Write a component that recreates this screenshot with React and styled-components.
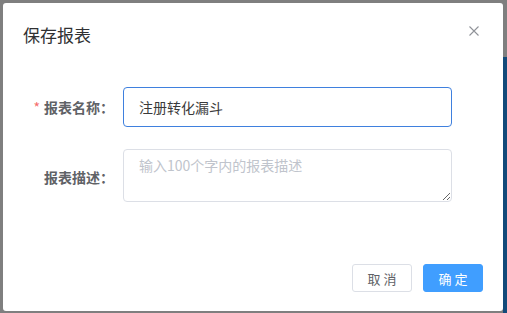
import React, { useState } from 'react'
import styled, { createGlobalStyle } from 'styled-components'

const GlobalStyle = createGlobalStyle`
    html, body {
        margin: 0;
        padding: 0;
        background: #7f7f7f;
        font-family: "Noto Sans CJK SC", "Noto Sans", "Liberation Sans", sans-serif;
    }
`

const Backdrop = styled.div`
    display: grid;
    grid-template-columns: 3px 500px 1fr;
    width: 507px;
    height: 313px;
    overflow: hidden;
    background: #7f7f7f;
`

const SideStrip = styled.div`
    grid-column: 3;
    display: flex;
    flex-direction: column;
`

const StripTop = styled.div`
    height: 57px;
    background: #7f7f7f;
`

const StripBody = styled.div`
    flex: 1;
    background: #124a7a;
`

const Dialog = styled.div`
    grid-column: 2;
    grid-row: 1;
    margin-top: 3px;
    height: 308px;
    background: #fff;
    border-radius: 3px;
    display: flex;
    flex-direction: column;
    box-sizing: border-box;
`

const Header = styled.div`
    display: flex;
    justify-content: space-between;
    align-items: flex-start;
    padding: 20px 24px 10px 20px;
`

const Title = styled.span`
    font-size: 17px;
    line-height: 24px;
    color: #303133;
`

const CloseButton = styled.button`
    border: 0;
    background: none;
    padding: 0;
    margin-top: 3px;
    width: 10px;
    height: 10px;
    cursor: pointer;
    display: flex;
`

const Body = styled.div`
    padding: 30px 20px 30px 20px;
    flex: 1;
`

const FormItem = styled.div`
    display: flex;
    align-items: ${p => (p.top ? 'flex-start' : 'center')};
    margin-bottom: ${p => (p.last ? '0' : '22px')};
`

const Label = styled.label`
    width: 100px;
    flex-shrink: 0;
    box-sizing: border-box;
    padding-right: 9px;
    padding-top: ${p => (p.top ? '8px' : '0')};
    text-align: right;
    font-size: 14px;
    line-height: 40px;
    font-weight: 700;
    color: #606266;
`

const Star = styled.span`
    color: #f56c6c;
    margin-right: 4px;
    font-weight: 400;
`

const TextInput = styled.input`
    width: 329px;
    height: 40px;
    box-sizing: border-box;
    border: 1px solid ${p => (p.focused ? '#3f80de' : '#dcdfe6')};
    border-radius: 4px;
    padding: 0 15px;
    font-family: inherit;
    font-size: 14px;
    color: #3a3a3a;
    outline: none;
`

const TextArea = styled.textarea`
    width: 329px;
    height: 53px;
    box-sizing: border-box;
    border: 1px solid #dcdfe6;
    border-radius: 4px;
    padding: 5px 15px;
    font-family: inherit;
    font-size: 14px;
    line-height: 21px;
    color: #606266;
    outline: none;
    resize: vertical;
    display: block;

    &::placeholder {
        color: #c0c4cc;
    }
`

const Footer = styled.div`
    display: flex;
    justify-content: flex-end;
    gap: 11px;
    padding: 10px 20px 19px;
`

const Button = styled.button`
    height: 28px;
    width: 60px;
    box-sizing: border-box;
    border-radius: 3px;
    padding: 0;
    font-family: inherit;
    font-size: 13px;
    letter-spacing: 3px;
    text-indent: 3px;
    cursor: pointer;
    border: 1px solid ${p => (p.primary ? '#409eff' : '#dcdfe6')};
    background: ${p => (p.primary ? '#409eff' : '#fff')};
    color: ${p => (p.primary ? '#fff' : '#606266')};
`

const CloseIcon = () => (
    <svg width="10" height="10" viewBox="0 0 10 10">
        <path d="M0.5 0.5 L9.5 9.5 M9.5 0.5 L0.5 9.5" stroke="#909399" strokeWidth="1.1" />
    </svg>
)

export default function App() {
    const [name, setName] = useState('注册转化漏斗')
    const [desc, setDesc] = useState('')

    return (
        <>
            <GlobalStyle />
            <Backdrop>
                <Dialog>
                    <Header>
                        <Title>保存报表</Title>
                        <CloseButton aria-label="关闭">
                            <CloseIcon />
                        </CloseButton>
                    </Header>
                    <Body>
                        <FormItem>
                            <Label>
                                <Star>*</Star>报表名称：
                            </Label>
                            <TextInput
                                focused
                                value={name}
                                onChange={e => setName(e.target.value)}
                            />
                        </FormItem>
                        <FormItem top last>
                            <Label top>报表描述：</Label>
                            <TextArea
                                placeholder="输入100个字内的报表描述"
                                value={desc}
                                onChange={e => setDesc(e.target.value)}
                            />
                        </FormItem>
                    </Body>
                    <Footer>
                        <Button>取消</Button>
                        <Button primary>确定</Button>
                    </Footer>
                </Dialog>
                <SideStrip>
                    <StripTop />
                    <StripBody />
                </SideStrip>
            </Backdrop>
        </>
    )
}
